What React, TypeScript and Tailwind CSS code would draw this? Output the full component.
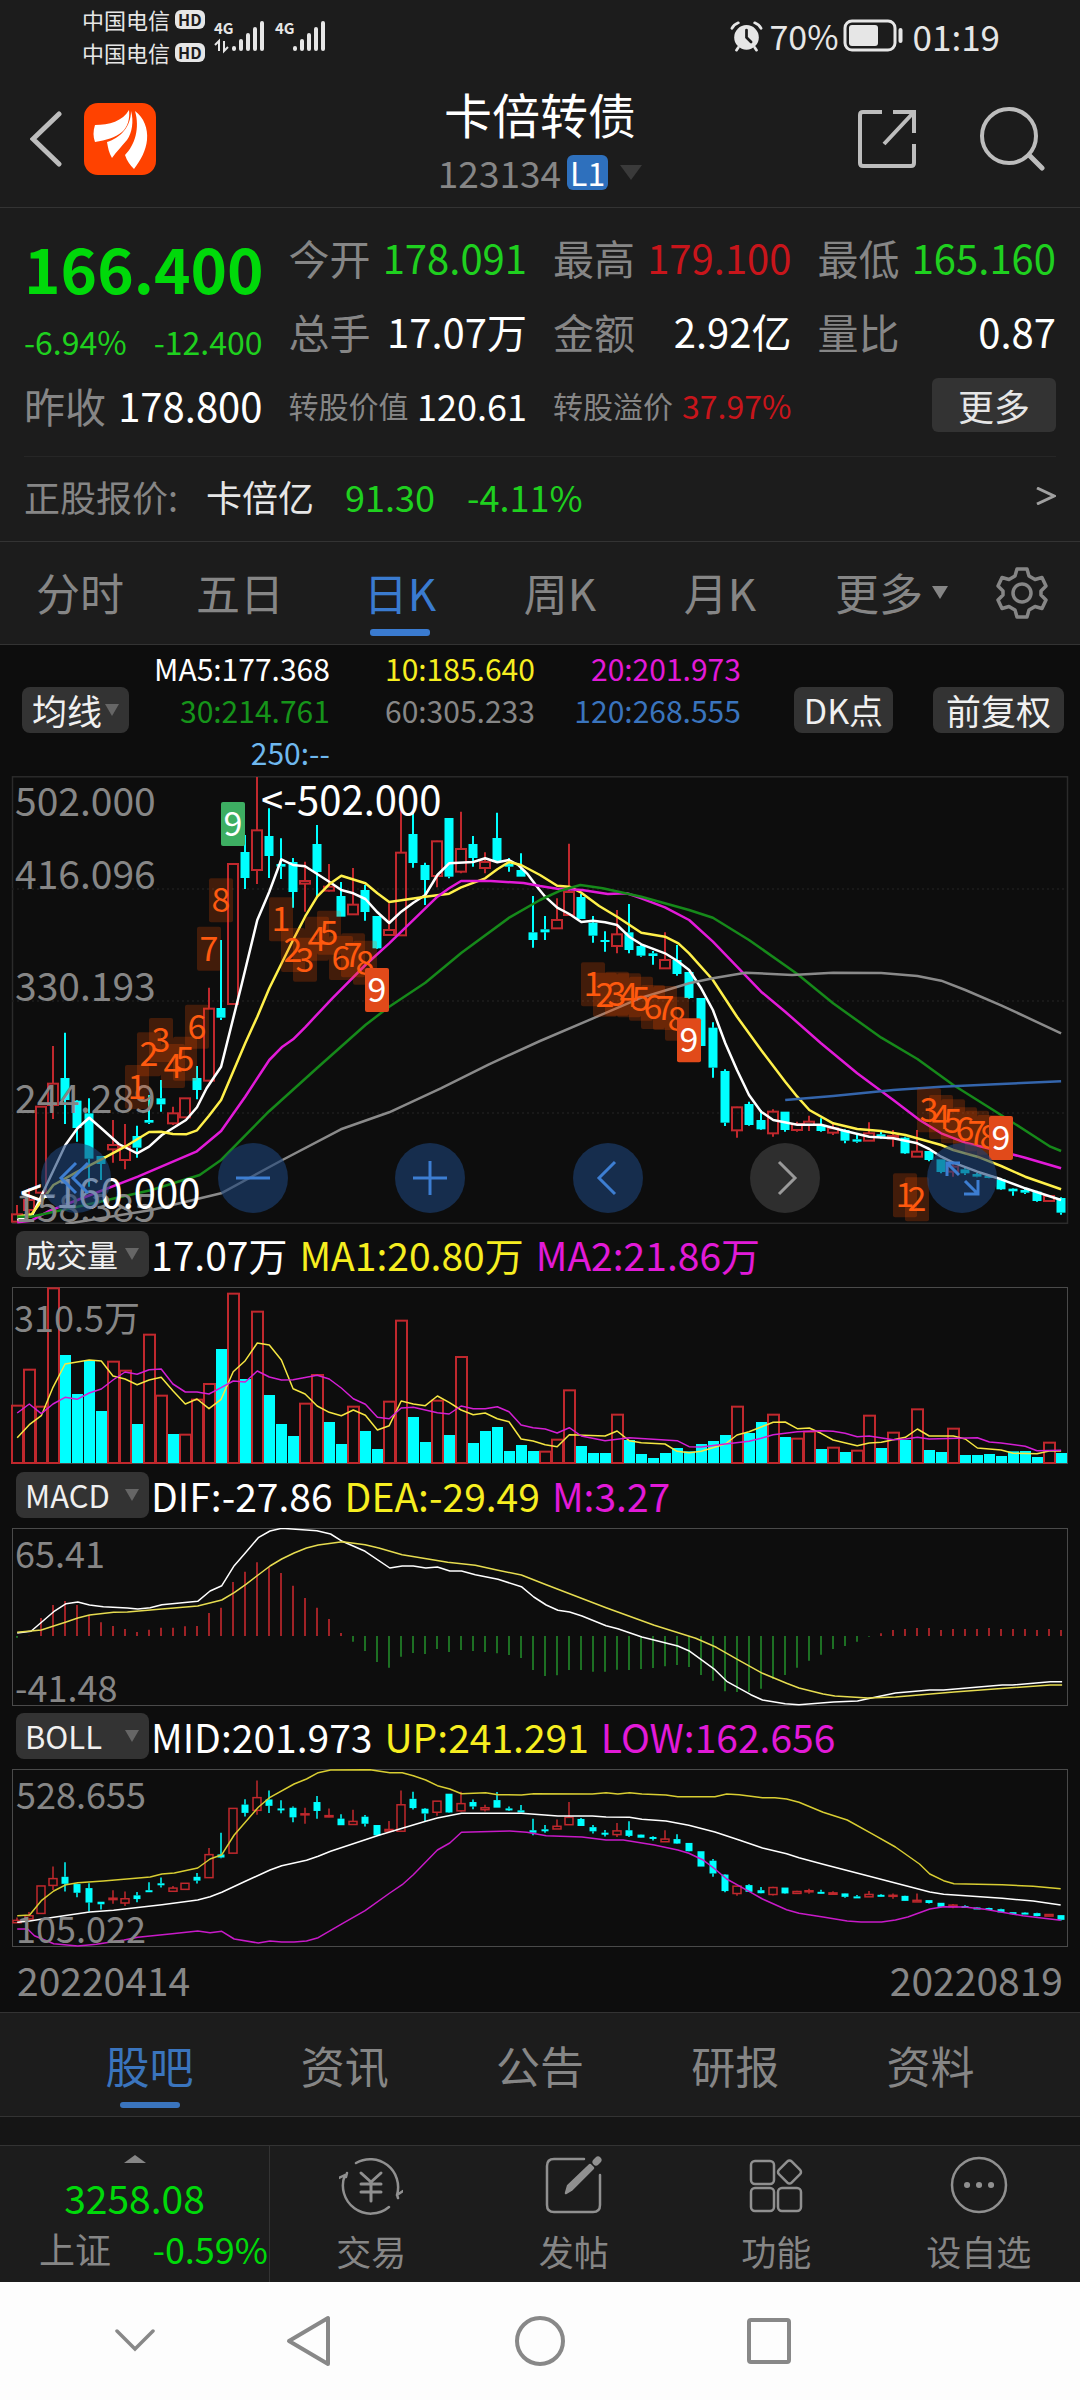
import type { ReactNode } from "react";

type Candle = [kind: "r" | "c", high: number, top: number, bottom: number, low: number];

const WIDE = 1568 / 540;
const HALF = 1568 / 1080;
const STEP = 12;
const FIRST = 17;
const cx = (i: number) => FIRST + STEP * i;

const toPoints = (data: string, unit: number) =>
  data
    .trim()
    .split(/\s+/)
    .map((pair) => {
      const [x, v] = pair.split(",").map(Number);
      return `${(x / unit).toFixed(1)},${(v / 3).toFixed(1)}`;
    })
    .join(" ");

const candles: Candle[] = [
  ["r", 1305, 1333, 1355, 1355], ["r", 1255, 1290, 1320, 1335], ["r", 1010, 1010, 1268, 1268], ["r", 828, 941, 1005, 1047],
  ["c", 788, 924, 990, 1062], ["c", 990, 992, 1074, 1115], ["c", 985, 1030, 1166, 1250], ["c", 1158, 1158, 1182, 1230],
  ["r", 1050, 1125, 1138, 1178], ["r", 1062, 1130, 1170, 1198], ["c", 1067, 1098, 1133, 1163], ["c", 975, 1050, 1058, 1062],
  ["c", 930, 985, 1003, 1025], ["r", 1010, 1030, 1060, 1065], ["r", 985, 985, 1042, 1042], ["c", 888, 924, 960, 988],
  ["r", 653, 716, 932, 932], ["c", 510, 714, 743, 750], ["r", 280, 282, 702, 705], ["c", 195, 246, 324, 357],
  ["r", 21, 181, 300, 342], ["c", 115, 198, 258, 324], ["c", 205, 282, 290, 327], ["c", 264, 276, 366, 413],
  ["r", 275, 333, 341, 425], ["c", 165, 222, 306, 380], ["r", 282, 350, 362, 365], ["c", 336, 378, 440, 440],
  ["r", 294, 404, 433, 433], ["c", 345, 360, 426, 452], ["c", 438, 438, 535, 537], ["r", 400, 480, 495, 495],
  ["r", 115, 248, 496, 496], ["c", 125, 192, 279, 293], ["c", 278, 285, 330, 405], ["r", 212, 214, 318, 352],
  ["c", 144, 144, 320, 325], ["r", 125, 237, 305, 310], ["c", 198, 222, 264, 290], ["r", 247, 276, 294, 310],
  ["c", 128, 204, 275, 275], ["c", 264, 282, 290, 305], ["c", 250, 300, 320, 320], ["c", 378, 487, 510, 533],
  ["c", 438, 478, 487, 510], ["r", 385, 450, 475, 475], ["r", 221, 366, 435, 435], ["c", 372, 381, 447, 447],
  ["c", 438, 458, 497, 518], ["c", 484, 510, 516, 545], ["r", 420, 493, 528, 550], ["c", 402, 487, 540, 550],
  ["c", 525, 528, 557, 560], ["c", 543, 550, 558, 584], ["r", 487, 570, 595, 595], ["c", 525, 570, 612, 617],
  ["c", 606, 606, 684, 686], ["c", 684, 684, 828, 828], ["c", 757, 773, 893, 923], ["c", 898, 903, 1058, 1068],
  ["r", 1010, 1012, 1081, 1103], ["c", 995, 1002, 1065, 1067], ["c", 1020, 1050, 1078, 1080], ["r", 1018, 1025, 1090, 1100],
  ["c", 1025, 1025, 1080, 1085], ["r", 1055, 1062, 1080, 1085], ["r", 1037, 1055, 1065, 1083], ["c", 1045, 1065, 1083, 1085],
  ["r", 1060, 1075, 1088, 1095], ["c", 1078, 1080, 1112, 1120], ["c", 1095, 1108, 1115, 1118], ["r", 1057, 1090, 1112, 1112],
  ["c", 1085, 1093, 1100, 1106], ["r", 1080, 1098, 1105, 1130], ["c", 1100, 1103, 1150, 1152], ["r", 1080, 1145, 1160, 1160],
  ["c", 1143, 1143, 1170, 1174], ["c", 1168, 1168, 1206, 1210], ["r", 1180, 1190, 1205, 1220], ["c", 1192, 1198, 1210, 1215],
  ["c", 1208, 1212, 1220, 1222], ["c", 1215, 1217, 1224, 1225], ["c", 1225, 1228, 1258, 1260], ["c", 1255, 1256, 1264, 1277],
  ["c", 1255, 1260, 1268, 1272], ["c", 1262, 1265, 1293, 1295], ["r", 1275, 1278, 1293, 1295], ["c", 1282, 1284, 1328, 1334],
];

const movingAverages = [
  { color: "#ffffff", points: "50,1350 95,1333 190,1125 225,1075 259,1043 294,1075 345,1122 398,1150 433,1130 470,1095 540,1050 572,1012 600,955 642,890 700,650 747,450 782,365 817,268 851,285 886,289 921,312 956,335 991,360 1026,370 1061,387 1096,427 1130,459 1165,425 1200,398 1235,375 1270,315 1304,280 1374,276 1409,265 1444,277 1478,270 1505,285 1530,310 1565,358 1583,380 1618,413 1653,432 1688,456 1722,452 1757,457 1792,465 1827,500 1862,523 1931,550 1966,572 2001,600 2036,655 2070,720 2106,820 2140,900 2175,975 2210,1025 2245,1050 2315,1064 2384,1064 2454,1083 2524,1100 2594,1105 2629,1112 2664,1120 2698,1137 2733,1160 2768,1178 2838,1205 2907,1228 2977,1255 3081,1290" },
  { color: "#fff04a", points: "50,1340 92,1333 155,1245 225,1205 300,1165 363,1130 433,1086 468,1085 502,1092 540,1093 572,1081 607,1037 642,990 712,820 747,740 782,655 851,510 886,440 921,380 956,343 991,317 1061,340 1096,370 1130,396 1235,380 1304,371 1339,352 1409,325 1444,298 1478,276 1513,285 1568,315 1618,347 1653,350 1688,368 1740,408 1792,440 1862,488 1931,500 1970,520 2001,550 2070,630 2140,740 2210,840 2280,935 2315,980 2350,1020 2419,1060 2489,1077 2559,1083 2629,1095 2733,1125 2768,1140 2838,1160 2907,1188 2977,1220 3081,1258" },
  { color: "#e21ad8", points: "50,1357 90,1352 145,1322 225,1290 400,1220 570,1145 642,1083 712,980 782,870 820,830 851,808 886,772 965,685 1061,585 1130,520 1270,380 1304,355 1339,333 1425,333 1520,339 1568,348 1618,356 1690,360 1765,372 1820,370 1862,385 1931,412 2001,450 2070,515 2140,590 2210,665 2280,725 2384,820 2489,910 2594,990 2670,1050 2733,1090 2803,1118 2890,1140 2977,1163 3081,1195" },
  { color: "#16891a", points: "50,1340 90,1340 225,1310 440,1260 580,1215 642,1170 780,1025 920,895 1061,765 1130,710 1235,638 1340,548 1480,442 1568,390 1627,362 1685,345 1750,355 1862,380 2001,420 2070,443 2175,510 2315,612 2419,700 2559,803 2664,867 2768,945 2907,1035 3050,1130 3081,1143" },
  { color: "#8a8a8a", points: "190,1362 440,1320 642,1270 820,1170 990,1078 1130,1027 1280,955 1420,883 1568,813 1722,745 1862,683 2001,640 2070,625 2165,608 2300,615 2419,608 2559,609 2664,618 2733,632 2803,660 2907,706 3081,790" },
  { color: "#3465ac", points: "2280,990 2419,978 2594,960 2733,950 2890,943 3081,934" },
];

/* Sequence markers: label, candle index, top of the marker. */
const marks: [string, number, number][] = [
  ["1", 10, 885], ["2", 11, 787], ["3", 12, 744], ["4", 13, 822], ["5", 14, 800], ["6", 15, 704], ["7", 16, 470], ["8", 17, 325],
  ["1", 22, 382], ["2", 23, 474], ["3", 24, 503], ["4", 25, 440], ["5", 26, 422], ["6", 27, 498], ["7", 28, 490], ["8", 29, 512],
  ["1", 48, 577], ["2", 49, 608], ["3", 50, 605], ["4", 51, 610], ["5", 52, 620], ["6", 53, 645], ["7", 54, 648], ["8", 55, 680],
  ["1", 74, 1210], ["2", 75, 1222],
  ["3", 76, 955], ["4", 77, 975], ["5", 78, 988], ["6", 79, 1012], ["7", 80, 1022], ["8", 81, 1035],
];
const nines: [number, number, string][] = [
  [18, 96, "#3dae62"], [30, 594, "#e14a1a"], [56, 745, "#e14a1a"], [82, 1038, "#e14a1a"],
];

const volumes =
  "r542 r434 r545 r190 c393 c510 c410 c561 r410 r437 c600 r329 r512 c630 r629 r524 r477 c375 r206 c465 r260 c513 c600 c636 r536 r450 c594 c660 r545 c621 c675 r530 r287 c579 c654 r527 c633 r396 c657 c621 c609 c681 c663 c681 r680 r644 r496 c666 c687 c687 r569 c648 c690 c702 c687 c672 c682 c660 c651 c633 r545 c627 c594 r569 c639 r641 r620 c675 r668 c684 r677 r572 c672 r623 c648 r553 c678 c684 r611 c693 c693 c690 c696 c682 c681 c699 r653 c687"
    .split(" ")
    .map((s) => ({ up: s[0] === "r", top: Number(s.slice(1)) / 3 }));
const volumeMa1 =
  "50,641 85,602 120,575 154,490 189,420 224,414 259,408 294,411 328,456 363,465 398,482 433,468 468,460 502,500 538,540 572,525 607,554 642,526 677,443 712,410 747,357 782,363 817,408 851,494 886,510 921,546 956,565 991,575 1026,558 1061,574 1096,618 1130,605 1165,531 1200,540 1235,545 1270,516 1304,535 1339,558 1374,572 1409,567 1444,584 1478,593 1513,645 1548,651 1583,662 1618,668 1653,632 1757,636 1792,621 1827,650 1862,656 1931,660 1966,682 2001,686 2036,682 2106,660 2140,633 2175,623 2245,595 2280,594 2315,614 2350,612 2384,628 2419,648 2489,665 2524,657 2559,655 2629,640 2664,615 2698,636 2768,636 2803,645 2838,672 2907,678 2942,688 3011,689 3046,681 3081,681";
const volumeMa2 =
  "50,567 85,540 120,569 154,540 189,520 224,526 259,507 294,495 328,468 363,444 398,451 433,437 468,435 502,480 538,504 572,504 607,510 642,491 677,471 712,474 747,441 782,459 817,468 851,467 921,454 956,465 991,492 1026,524 1061,541 1096,580 1130,584 1165,552 1200,550 1270,566 1304,570 1339,546 1374,554 1409,554 1444,548 1478,563 1513,603 1548,611 1583,615 1618,627 1653,611 1688,636 1757,650 1827,641 1966,650 2001,668 2036,669 2106,660 2175,652 2210,643 2245,632 2315,623 2384,620 2419,622 2454,628 2489,638 2524,636 2594,647 2629,645 2664,640 2698,645 2838,641 2873,654 2907,657 2977,667 3011,680 3081,679";

const histogram = [
  506, 500, 447, 408, 396, 408, 438, 460, 471, 480, 489, 482, 476, 476, 472, 471, 432, 416, 339, 308, 280, 294, 312, 350, 387, 416, 450, 492,
  518, 546, 579, 596, 563, 552, 555, 540, 549, 543, 546, 549, 553, 558, 567, 603, 621, 619, 603, 603, 608, 608, 602, 603, 600, 597, 592, 588,
  594, 618, 635, 667, 669, 669, 659, 630, 618, 596, 575, 557, 540, 531, 518, 503, 493, 483, 480, 477, 477, 483, 480, 480, 480, 477, 480, 480,
  480, 483, 480, 483,
];
const dif =
  "25,492 45,487 78,428 96,404 113,399 130,408 150,413 185,417 200,420 218,416 235,407 287,397 305,366 322,350 340,290 357,250 375,206 392,186 409,178 460,185 480,195 497,217 530,247 566,297 584,291 600,291 618,297 635,294 653,306 670,306 690,317 723,331 757,353 775,384 793,408 810,424 827,429 845,441 880,470 897,479 932,504 984,531 1000,545 1020,575 1038,602 1055,637 1090,677 1107,693 1140,704 1160,707 1210,699 1245,696 1265,687 1300,672 1350,663 1370,663 1455,648 1470,648 1525,638 1542,638";
const dea =
  "25,490 60,483 96,459 113,447 130,438 165,430 185,429 235,420 287,411 322,393 340,371 357,346 392,291 409,270 427,252 445,237 462,228 497,218 530,227 550,237 584,257 650,280 690,289 723,304 757,318 793,347 880,416 950,469 1010,508 1040,535 1073,574 1107,613 1142,643 1160,657 1195,675 1212,681 1260,687 1300,684 1385,669 1525,648 1542,648";

const bollUp =
  "25,620 43,618 60,575 78,546 96,527 113,521 150,516 218,504 235,495 253,492 287,477 305,450 322,437 340,378 375,295 392,265 427,225 445,210 462,191 480,183 537,182 566,191 584,191 600,200 618,213 635,230 653,240 670,254 705,251 723,257 757,258 775,254 860,255 880,251 897,255 914,251 932,255 967,258 984,263 1038,263 1055,255 1073,257 1107,266 1125,266 1142,270 1160,280 1195,310 1230,333 1265,373 1300,414 1335,465 1350,495 1370,515 1385,524 1455,527 1500,532 1540,539";
const bollMid =
  "25,640 43,636 78,625 130,609 165,604 235,587 287,573 305,563 322,550 357,516 392,483 409,470 445,454 462,442 480,427 550,379 584,358 618,337 635,327 670,313 757,313 810,321 860,321 880,324 914,325 932,331 967,336 1000,349 1038,369 1073,393 1107,417 1142,434 1160,446 1195,466 1265,503 1350,549 1370,556 1455,568 1500,576 1540,588";
const bollLow =
  "25,660 40,660 50,680 78,704 113,711 140,706 180,693 200,685 250,674 287,666 305,671 322,667 340,690 375,702 392,696 409,699 427,699 445,696 462,686 497,644 530,605 566,552 584,527 600,497 635,423 653,402 670,370 740,366 765,370 793,380 845,384 880,393 905,393 932,402 950,408 984,423 1000,433 1020,452 1038,480 1055,510 1090,550 1107,570 1142,602 1160,613 1195,624 1230,636 1250,639 1280,639 1300,633 1318,624 1350,600 1370,593 1400,594 1430,601 1485,620 1540,634";

const RED = "#c0282d";
const CYAN = "#00ffff";

function Line({ data, unit, color, width = 2.5 }: { data: string; unit: number; color: string; width?: number }) {
  return <polyline points={toPoints(data, unit)} fill="none" stroke={color} strokeWidth={width} strokeLinejoin="round" />;
}

function Candles({ y, half, stroke }: { y: (v: number) => number; half: number; stroke: number }) {
  return (
    <g>
      {candles.map(([kind, high, top, bottom, low], i) => {
        const x = cx(i);
        const t = y(top);
        const b = y(bottom);
        const color = kind === "r" ? RED : CYAN;
        return (
          <g key={i} stroke={color} strokeWidth={stroke}>
            {high < top && <line x1={x} x2={x} y1={y(high)} y2={t} />}
            {low > bottom && <line x1={x} x2={x} y1={b} y2={y(low)} />}
            {kind === "r" ? (
              <rect x={x - half} y={t} width={half * 2} height={Math.max(b - t, 1)} fill="none" />
            ) : (
              <rect x={x - half + 0.5} y={t} width={half * 2 - 1} height={Math.max(b - t, 2)} fill={CYAN} stroke="none" />
            )}
          </g>
        );
      })}
    </g>
  );
}

function PriceChart() {
  const y = (v: number) => v / 3;
  return (
    <svg viewBox="0 6 1080 448" className="block w-full" role="img" aria-label="日K">
      <g stroke="#2b2b2b" strokeWidth="1.5" fill="none">
        <rect x="12.5" y="6.8" width="1055" height="446.5" />
        <path d="M12 119H1067M12 231H1067M12 343H1067" strokeDasharray="2 3" stroke="#1e1e1e" />
      </g>
      <Candles y={y} half={5} stroke={2} />
      {movingAverages.map((m) => (
        <Line key={m.color} data={m.points} unit={WIDE} color={m.color} />
      ))}
      <g fontSize="39" fill="#868686">
        <text x="15" y="46">502.000</text>
        <text x="15" y="119">416.096</text>
        <text x="15" y="231">330.193</text>
        <text x="15" y="343">244.289</text>
        <text x="15" y="452">158.385</text>
      </g>
      {marks.map(([label, i, top], k) => (
        <g key={k}>
          <rect x={cx(i) - 12} y={top / 3} width="24" height="44" rx="2" fill="#ff5000" fillOpacity="0.22" />
          <text x={cx(i)} y={top / 3 + 34} fontSize="34" textAnchor="middle" fill="#ff5a10">{label}</text>
        </g>
      ))}
      {nines.map(([i, top, fill]) => (
        <g key={i}>
          <rect x={cx(i) - 12} y={top / 3} width="24" height="44" rx="2" fill={fill} />
          <text x={cx(i)} y={top / 3 + 34} fontSize="34" textAnchor="middle" fill="#fff">9</text>
        </g>
      ))}
      <g fontSize="40" fill="#fff">
        <text x="261" y="45">&lt;-502.000</text>
        <text x="20" y="438">&lt;-160.000</text>
      </g>
    </svg>
  );
}

function VolumeChart() {
  return (
    <svg viewBox="0 63 1080 178" className="block w-full" role="img" aria-label="成交量">
      <rect x="12.5" y="63.5" width="1055" height="176" fill="none" stroke="#4a4a4a" />
      {volumes.map((b, i) =>
        b.up ? (
          <rect key={i} x={cx(i) - 5} y={b.top + 1} width="11" height={238 - b.top} fill="none" stroke={RED} strokeWidth="2" />
        ) : (
          <rect key={i} x={cx(i) - 5} y={b.top} width="11" height={239 - b.top} fill={CYAN} />
        ),
      )}
      <Line data={volumeMa1} unit={WIDE} color="#f5e642" width={1.5} />
      <Line data={volumeMa2} unit={WIDE} color="#d41fd4" width={1.5} />
      <text x="14" y="108" fontSize="36" fill="#868686">310.5万</text>
    </svg>
  );
}

function MacdChart() {
  return (
    <svg viewBox="0 59 1080 178" className="block w-full" role="img" aria-label="MACD">
      <rect x="12.5" y="59.5" width="1055" height="177" fill="none" stroke="#4a4a4a" />
      {histogram.map((v, i) => (
        <line key={i} x1={cx(i)} x2={cx(i)} y1="167" y2={v / 3} stroke={v < 501 ? "#a02226" : "#1d7023"} strokeWidth="2" />
      ))}
      <Line data={dif} unit={HALF} color="#ffffff" width={1.5} />
      <Line data={dea} unit={HALF} color="#e6dc50" width={1.5} />
      <g fontSize="36" fill="#868686">
        <text x="15" y="99">65.41</text>
        <text x="15" y="233">-41.48</text>
      </g>
    </svg>
  );
}

function BollChart() {
  const y = (v: number) => {
    const price = 502 - (v - 21) * 0.2557;
    return 60.5 + (528.655 - price) * 0.4166;
  };
  return (
    <svg viewBox="0 60 1080 178" className="block w-full" role="img" aria-label="BOLL">
      <rect x="12.5" y="60.5" width="1055" height="177" fill="none" stroke="#4a4a4a" />
      <Candles y={y} half={4} stroke={1.5} />
      <Line data={bollUp} unit={HALF} color="#d8cd32" width={1.5} />
      <Line data={bollMid} unit={HALF} color="#ffffff" width={1.5} />
      <Line data={bollLow} unit={HALF} color="#c81ac8" width={1.5} />
      <g fontSize="36" fill="#868686">
        <text x="16" y="100">528.655</text>
        <text x="16" y="234">105.022</text>
      </g>
    </svg>
  );
}

function Down({ className }: { className: string }) {
  return (
    <svg viewBox="0 0 12 12" preserveAspectRatio="none" className={className} aria-hidden="true">
      <path d="M0 0H12L6 12Z" fill="currentColor" />
    </svg>
  );
}

function Signal({ data }: { data?: boolean }) {
  return (
    <svg viewBox="0 0 52 32" className="h-[32px] w-[52px] overflow-visible" aria-hidden="true">
      <text x="0" y="14" fontSize="15" fontWeight="700" fill="#e6e6e6">4G</text>
      <g stroke="#e6e6e6" strokeWidth="4" strokeLinecap="round">
        <path d="M20 28V29M27 21V29M34 15V29M41 9V29M48 3V29" />
      </g>
      {data && <path d="M1 25L5 21V31M10 21V31L14 27" fill="none" stroke="#e6e6e6" strokeWidth="2" />}
    </svg>
  );
}

function Carrier() {
  return (
    <div className="flex items-center gap-[5px] text-[22px] leading-[33px] text-[#e6e6e6]">
      <span>中国电信</span>
      <span className="rounded-[6px] bg-[#e6e6e6] px-[3px] text-[16px] leading-[19px] font-bold text-[#1c1c1c]">HD</span>
    </div>
  );
}

function StatusBar() {
  return (
    <div className="flex items-center justify-between pt-[3px] pr-[80px] pb-[11px] pl-[82px] text-[#e6e6e6]">
      <div className="flex items-center">
        <div>
          <Carrier />
          <Carrier />
        </div>
        <div className="ml-[9px] flex gap-[9px]">
          <Signal data />
          <Signal />
        </div>
      </div>
      <div className="flex items-center text-[35px] leading-[40px]">
        <svg viewBox="0 0 36 34" className="mr-[7px] h-[31px] w-[33px]" fill="none" stroke="#e6e6e6" strokeLinecap="round" aria-hidden="true">
          <circle cx="18" cy="18" r="13.5" fill="#e6e6e6" stroke="none" />
          <path d="M2 8Q4 4 9 2M34 8Q32 4 27 2M9 29L7 32M27 29L29 32" strokeWidth="3" />
          <path d="M18 10V18L23 23" stroke="#1c1c1c" strokeWidth="3" />
        </svg>
        <span className="text-[34px]">70%</span>
        <svg viewBox="0 0 60 34" className="mr-[10px] ml-[4px] h-[34px] w-[60px]" fill="none" stroke="#e6e6e6" aria-hidden="true">
          <rect x="2" y="2" width="50" height="29" rx="7" strokeWidth="3" />
          <rect x="6" y="6" width="29" height="21" rx="3" fill="#e6e6e6" stroke="none" />
          <path d="M57.500 11V22" strokeWidth="4" strokeLinecap="round" />
        </svg>
        <span>01:19</span>
      </div>
    </div>
  );
}

function Header() {
  return (
    <header className="grid grid-cols-[1fr_auto_1fr] items-center border-b border-[#333] pb-[9px]">
      <div className="flex items-center gap-[22px] pl-[30px]">
        <button type="button" aria-label="返回">
          <svg viewBox="0 0 32 56" className="h-[56px] w-[32px]" fill="none" stroke="#bdbdbd" strokeWidth="5" strokeLinecap="round">
            <path d="M29 3L3 28L29 53" />
          </svg>
        </button>
        <a href="#home" aria-label="首页">
          <svg viewBox="0 0 72 72" className="h-[72px] w-[72px]">
            <rect width="72" height="72" rx="14" fill="#ff4200" />
            <g fill="#fff">
              <path d="M45 7C46 15 44 24 38 29C31 35 22 37 11 39C9 34 9 28 11 22C25 22 39 18 45 7Z" />
              <path d="M47 8C50 18 48 30 43 37C38 43 33 48 28 55C25 50 24 45 23 39C36 35 47 24 47 8Z" />
              <path d="M51 8C60 15 64 25 63 37C62 47 57 57 50 66C46 62 43 58 41 52C51 42 56 25 51 8Z" />
            </g>
          </svg>
        </a>
      </div>
      <div className="flex flex-col items-center">
        <h1 className="text-[48px] leading-[66px] text-white">卡倍转债</h1>
        <div className="flex items-center">
          <span className="text-[37px] leading-[52px] text-[#868686]">123134</span>
          <span className="ml-[6px] rounded-[6px] bg-[#2e70bd] px-[3px] text-[32px] leading-[35px] text-white">L1</span>
          <Down className="ml-[12px] h-[15px] w-[22px] text-[#3a3a3a]" />
        </div>
      </div>
      <div className="flex items-center justify-end gap-[62px] pr-[35px]">
        <button type="button" aria-label="分享">
          <svg viewBox="0 0 60 60" className="h-[60px] w-[60px]" fill="none" stroke="#bdbdbd" strokeWidth="4">
            <path d="M25 3H6Q3 3 3 6V54Q3 57 6 57H54Q57 57 57 54V35M36 3H57V24M57 3L27 35" />
          </svg>
        </button>
        <button type="button" aria-label="搜索">
          <svg viewBox="0 0 66 66" className="h-[66px] w-[66px]" fill="none" stroke="#bdbdbd" strokeWidth="4" strokeLinecap="round">
            <circle cx="30" cy="30" r="27" />
            <path d="M50 49L63 62" strokeWidth="5" />
          </svg>
        </button>
      </div>
    </header>
  );
}

const GREEN = "text-[#1fd01f]";
const CRIMSON = "text-[#c8151b]";

function Stat({
  label,
  value,
  tone = "text-white",
  labelSize = "text-[41px]",
  valueSize = "text-[40px]",
}: {
  label: string;
  value: string;
  tone?: string;
  labelSize?: string;
  valueSize?: string;
}) {
  return (
    <div className="flex items-center justify-between leading-[48px] whitespace-nowrap">
      <dt className={`text-[#868686] ${labelSize}`}>{label}</dt>
      <dd className={`${tone} ${valueSize}`}>{value}</dd>
    </div>
  );
}

function Quote() {
  return (
    <section className="px-[24px] pt-[25px]">
      <dl className="grid grid-cols-4 items-center gap-x-[26px] gap-y-[26px]">
        <div className="row-span-2 -mt-[4px] -mb-[8px] flex flex-col gap-[14px] whitespace-nowrap">
          <dt className="sr-only">最新价</dt>
          <dd className="text-[62px] leading-[76px] font-bold text-[#00d90a]">166.400</dd>
          <dd className={`flex justify-between text-[32px] leading-[44px] ${GREEN}`}>
            <span>-6.94%</span>
            <span>-12.400</span>
          </dd>
        </div>
        <Stat label="今开" value="178.091" tone={GREEN} />
        <Stat label="最高" value="179.100" tone={CRIMSON} />
        <Stat label="最低" value="165.160" tone={GREEN} />
        <Stat label="总手" value="17.07万" />
        <Stat label="金额" value="2.92亿" />
        <Stat label="量比" value="0.87" />
        <Stat label="昨收" value="178.800" />
        <Stat label="转股价值" value="120.61" labelSize="text-[30px]" valueSize="text-[36px]" />
        <Stat label="转股溢价" value="37.97%" tone={CRIMSON} labelSize="text-[30px]" valueSize="text-[32px]" />
        <div className="-my-[4px] flex justify-end">
          <button type="button" className="rounded-[6px] bg-[#333] px-[26px] text-[36px] leading-[54px] text-[#e6e6e6]">更多</button>
        </div>
      </dl>
      <a href="#stock" className="mt-[27px] flex items-center border-t border-[#262626] pt-[13px] pb-[19px] text-[36px] leading-[52px]">
        <span className="text-[#868686]">正股报价:</span>
        <span className="ml-[28px] text-[#e6e6e6]">卡倍亿</span>
        <span className={`ml-[31px] ${GREEN}`}>91.30</span>
        <span className={`ml-[32px] ${GREEN}`}>-4.11%</span>
        <svg viewBox="0 0 20 18" className="ml-auto h-[18px] w-[20px]" fill="none" stroke="#a0a0a0" strokeWidth="3" aria-hidden="true">
          <path d="M1 1L18 9L1 17" />
        </svg>
      </a>
    </section>
  );
}

function PeriodTabs() {
  return (
    <nav className="flex items-center border-y border-[#333] pr-[20px] text-[44px] leading-[60px] text-[#868686]">
      {["分时", "五日", "日K", "周K", "月K"].map((name) => (
        <button
          key={name}
          type="button"
          className={
            name === "日K"
              ? "relative flex-[160] pt-[20px] pb-[22px] text-[#3a7bd0] after:absolute after:bottom-[8px] after:left-1/2 after:h-[7px] after:w-[60px] after:-translate-x-1/2 after:rounded-[3px] after:bg-[#3a7bd0]"
              : "flex-[160] pt-[20px] pb-[22px]"
          }
        >
          {name}
        </button>
      ))}
      <button type="button" className="flex flex-[183] items-center justify-center gap-[9px] pt-[20px] pb-[22px]">
        更多
        <Down className="h-[13px] w-[16px]" />
      </button>
      <button type="button" aria-label="设置" className="flex flex-[77] justify-center">
        <svg viewBox="0 0 52 52" className="h-[52px] w-[52px]" fill="none" stroke="#868686" strokeWidth="3.500" strokeLinejoin="round">
          <path d="M21 2H31L33 9L39 12.500L46 10.500L50 19L45 24V28L50 33L46 41.500L39 39.500L33 43L31 50H21L19 43L13 39.500L6 41.500L2 33L7 28V24L2 19L6 10.500L13 12.500L19 9Z" />
          <circle cx="26" cy="26" r="9" />
        </svg>
      </button>
    </nav>
  );
}

function AverageRow() {
  return (
    <div className="flex items-center justify-between pt-[2px] pr-[16px] pb-[3px] pl-[22px]">
      <button type="button" className="flex items-center gap-[3px] rounded-[8px] bg-[#333] px-[10px] text-[35px] leading-[46px] whitespace-nowrap text-[#f0f0f0]">
        均线
        <Down className="h-[12px] w-[14px] text-[#666]" />
      </button>
      <div className="mr-[52px] ml-[18px] grid grid-cols-[182px_205px_206px] text-right text-[30px] leading-[42px] whitespace-nowrap">
        <span className="text-white">MA5:177.368</span>
        <span className="text-[#f6ee20]">10:185.640</span>
        <span className="text-[#e21ad8]">20:201.973</span>
        <span className="text-[#16941a]">30:214.761</span>
        <span className="text-[#868686]">60:305.233</span>
        <span className="text-[#3a74bd]">120:268.555</span>
        <span className="text-[#6fb8ee]">250:--</span>
      </div>
      <button type="button" className="rounded-[8px] bg-[#333] px-[10px] text-[34px] leading-[46px] whitespace-nowrap text-[#f0f0f0]">DK点</button>
      <button type="button" className="ml-[39px] rounded-[8px] bg-[#333] px-[13px] text-[35px] leading-[46px] whitespace-nowrap text-[#f0f0f0]">前复权</button>
    </div>
  );
}

function IndicatorHeader({ name, values }: { name: string; values: string[] }) {
  return (
    <div className="flex items-center gap-[12px] pt-[3px] pb-[6px] pl-[16px] text-[39px] leading-[54px] whitespace-nowrap">
      <button type="button" className="-mr-[10px] flex w-[133px] items-center justify-between rounded-[8px] bg-[#333] pr-[10px] pl-[9px] text-[31px] leading-[46px] text-[#f0f0f0]">
        {name}
        <Down className="h-[12px] w-[14px] text-[#666]" />
      </button>
      <span className="text-white">{values[0]}</span>
      <span className="text-[#f6ee20]">{values[1]}</span>
      <span className="text-[#e21ad8]">{values[2]}</span>
    </div>
  );
}

function ChartButton({ label, muted, children }: { label: string; muted?: boolean; children: ReactNode }) {
  return (
    <button
      type="button"
      aria-label={label}
      className={
        muted
          ? "flex h-[70px] w-[70px] items-center justify-center rounded-full bg-[#2e2e2e] text-[#9a9a9a]"
          : "flex h-[70px] w-[70px] items-center justify-center rounded-full bg-[#1d4378]/60 text-[#3d7ed2]"
      }
    >
      <svg viewBox="0 0 36 36" className="h-[36px] w-[36px]" fill="none" stroke="currentColor" strokeWidth="3">
        {children}
      </svg>
    </button>
  );
}

function Charts() {
  return (
    <main className="bg-[#0d0d0d]">
      <AverageRow />
      <div className="relative">
        <PriceChart />
        <div className="absolute inset-x-[41px] bottom-[11px] flex justify-between pr-[42px]">
          <ChartButton label="最早"><path d="M18 3L3 18L18 33M30 3L15 18L30 33" /></ChartButton>
          <ChartButton label="缩小"><path d="M1 18H35" /></ChartButton>
          <ChartButton label="放大"><path d="M1 18H35M18 1V35" /></ChartButton>
          <ChartButton label="向左"><path d="M25 2L9 18L25 34" /></ChartButton>
          <ChartButton label="向右" muted><path d="M12 2L28 18L12 34" /></ChartButton>
          <ChartButton label="全屏"><path d="M3 16V3H16M3 3L15 15M34 20V34H20M34 34L21 21" /></ChartButton>
        </div>
      </div>
      <IndicatorHeader name="成交量" values={["17.07万", "MA1:20.80万", "MA2:21.86万"]} />
      <VolumeChart />
      <IndicatorHeader name="MACD" values={["DIF:-27.86", "DEA:-29.49", "M:3.27"]} />
      <MacdChart />
      <IndicatorHeader name="BOLL" values={["MID:201.973", "UP:241.291", "LOW:162.656"]} />
      <BollChart />
      <div className="flex justify-between px-[17px] pt-[6px] pb-[7px] text-[39px] leading-[52px] text-[#868686]">
        <span>20220414</span>
        <span>20220819</span>
      </div>
    </main>
  );
}

function SectionTabs() {
  return (
    <nav className="flex border-y border-[#333] px-[52px] text-[44px] leading-[60px] text-[#868686]">
      {["股吧", "资讯", "公告", "研报", "资料"].map((name) => (
        <button
          key={name}
          type="button"
          className={
            name === "股吧"
              ? "relative flex-1 pt-[22px] pb-[21px] text-[#3a74bd] after:absolute after:bottom-[8px] after:left-1/2 after:h-[6px] after:w-[60px] after:-translate-x-1/2 after:rounded-[3px] after:bg-[#3a74bd]"
              : "flex-1 pt-[22px] pb-[21px]"
          }
        >
          {name}
        </button>
      ))}
    </nav>
  );
}

function Action({ label, children }: { label: string; children: ReactNode }) {
  return (
    <button type="button" className="flex flex-col items-center pt-[8px] text-[35px] leading-[52px] text-[#868686]">
      <svg viewBox="0 0 64 64" className="h-[64px] w-[64px]" fill="none" stroke="#909090" strokeWidth="2.500" strokeLinecap="round" strokeLinejoin="round">
        {children}
      </svg>
      <span className="mt-[7px]">{label}</span>
    </button>
  );
}

function BottomBar() {
  return (
    <div className="grid grid-cols-[1fr_3fr] border-t border-[#333]">
      <a href="#index" className="flex flex-col items-center border-r border-[#333] pt-[9px] pb-[9px] text-[#00d90a]">
        <svg viewBox="0 0 22 8" className="h-[8px] w-[22px]" aria-hidden="true">
          <path d="M11 0L22 8H0Z" fill="#868686" />
        </svg>
        <span className="mt-[8px] text-[39px] leading-[52px]">3258.08</span>
        <span className="flex w-full justify-between pr-px pl-[39px] text-[36px] leading-[50px]">
          <span className="text-[#868686]">上证</span>
          <span>-0.59%</span>
        </span>
      </a>
      <div className="grid grid-cols-4">
        <Action label="交易">
          <path d="M17 9A28 28 0 0 1 58 41M58 41L64 37M58 41L59 44M50 53A28 28 0 0 1 6 21M6 21L0 24M7 23L8 19" />
          <path d="M22 19L32 28L42 19M22 30H42M22 38H42M32 28V47" strokeWidth="3" />
        </Action>
        <Action label="发帖">
          <path d="M42 5H12Q5 5 5 12V51Q5 58 12 58H51Q58 58 58 51V21" />
          <path d="M24 39L26 32L48 11L51 14L29 36Z" fill="#909090" />
          <path d="M54 8L56 6" strokeWidth="7" />
        </Action>
        <Action label="功能">
          <rect x="7" y="7" width="23" height="23" rx="4" />
          <rect x="7" y="34" width="23" height="23" rx="4" />
          <rect x="34" y="34" width="23" height="23" rx="4" />
          <rect x="36.500" y="9" width="18" height="18" rx="3" transform="rotate(45 45.500 18)" />
        </Action>
        <Action label="设自选">
          <circle cx="32" cy="31" r="27" />
          <path d="M20 31H20.100M32 31H32.100M44 31H44.100" strokeWidth="6" />
        </Action>
      </div>
    </div>
  );
}

function SystemNav() {
  return (
    <nav className="grid grid-cols-[270fr_78fr_384fr_74fr_274fr] items-center justify-items-center bg-[#fdfdfd] py-[33px]">
      <button type="button" aria-label="收起">
        <svg viewBox="0 0 40 52" className="h-[52px] w-[40px]" fill="none" stroke="#888" strokeWidth="3.500" strokeLinecap="round">
          <path d="M2 16L20 34L38 16" />
        </svg>
      </button>
      <button type="button" aria-label="后退">
        <svg viewBox="0 0 46 52" className="h-[52px] w-[46px]" fill="none" stroke="#888" strokeWidth="4" strokeLinejoin="round">
          <path d="M42 3V49L3 26Z" />
        </svg>
      </button>
      <button type="button" aria-label="主屏幕">
        <svg viewBox="0 0 52 52" className="h-[52px] w-[52px]" fill="none" stroke="#888" strokeWidth="4">
          <circle cx="26" cy="26" r="23" />
        </svg>
      </button>
      <button type="button" aria-label="最近任务">
        <svg viewBox="0 0 46 52" className="h-[52px] w-[46px]" fill="none" stroke="#888" strokeWidth="4" strokeLinejoin="round">
          <rect x="3" y="5" width="40" height="42" rx="2" />
        </svg>
      </button>
    </nav>
  );
}

export default function App() {
  return (
    <div className="w-full bg-[#1c1c1c] font-['Noto_Sans_CJK_SC',sans-serif]">
      <StatusBar />
      <Header />
      <Quote />
      <PeriodTabs />
      <Charts />
      <SectionTabs />
      <div className="h-[28px] bg-[#151515]" />
      <BottomBar />
      <SystemNav />
    </div>
  );
}
